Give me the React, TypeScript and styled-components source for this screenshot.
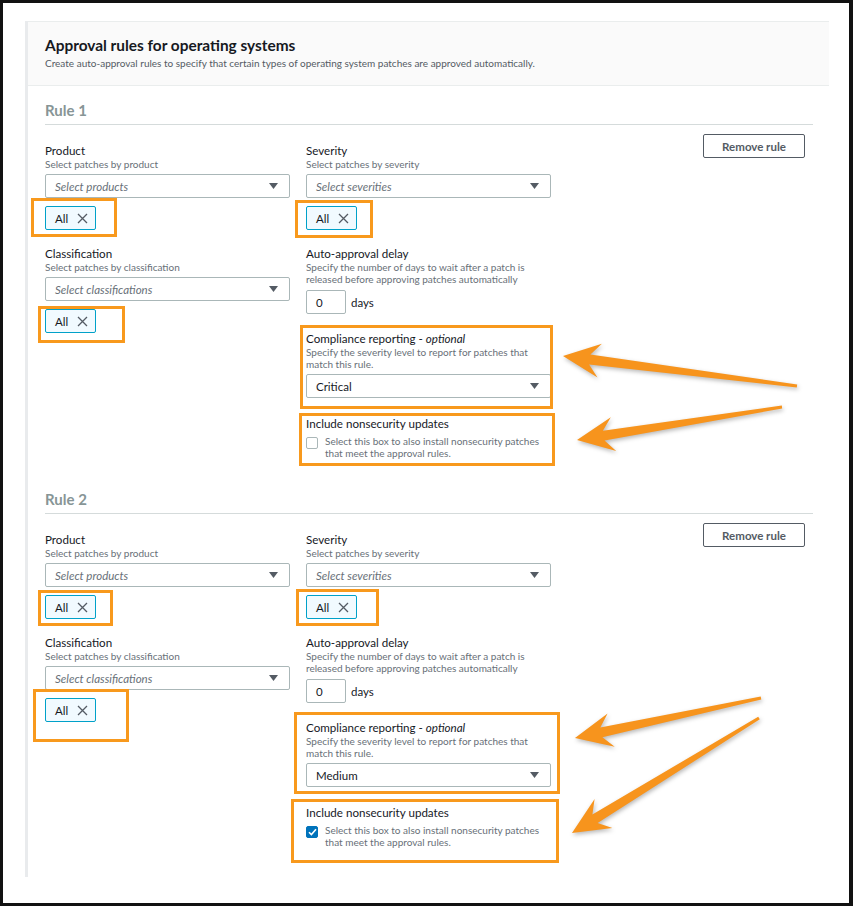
import React from 'react';
import styled, { createGlobalStyle } from 'styled-components';

const GlobalStyle = createGlobalStyle`
  * { box-sizing: border-box; }
  body {
    margin: 0;
    background: #fff;
    font-family: Lato, "Open Sans", sans-serif;
    color: #16191f;
  }
`;

const Frame = styled.div`
  position: relative;
  width: 853px;
  height: 906px;
  border: 3px solid #111;
  border-right-width: 4px;
  padding: 18px 0 0 22px;
  overflow: hidden;
`;

const Panel = styled.section`
  width: 804px;
  height: 856px;
  border-left: 3px solid #e9ebed;
`;

const Header = styled.header`
  height: 65px;
  padding: 14px 17px 0;
  background: #fafafa;
  border-top: 1px solid #eaeded;
  border-bottom: 1px solid #eaeded;
`;

const Title = styled.h2`
  margin: 0;
  font-size: 15.4px;
  font-weight: 700;
  line-height: 18px;
  color: #16191f;
`;

const Subtitle = styled.p`
  margin: 3px 0 0;
  font-size: 10px;
  line-height: 12px;
  color: #545b64;
`;

const Body = styled.div`
  padding: 14px 16px 0 17px;
`;

const Rule = styled.div`
  margin-bottom: 30px;
`;

const RuleHeading = styled.h3`
  margin: 0;
  padding-bottom: 4px;
  border-bottom: 1px solid #d5dbdb;
  font-size: 15px;
  font-weight: 700;
  line-height: 20px;
  color: #879596;
`;

const Fields = styled.div`
  display: grid;
  grid-template-columns: 245px 245px 1fr;
  column-gap: 16px;
  align-items: start;
`;

const Column = styled.div`
  display: flex;
  flex-direction: column;
  margin-top: 18px;
`;

const Field = styled.div<{ $gap?: number }>`
  margin-top: ${(p) => p.$gap ?? 0}px;
`;

const Label = styled.div`
  font-size: 11.6px;
  line-height: 15px;
  color: #16191f;

  em {
    font-style: italic;
  }
`;

const Desc = styled.div`
  font-size: 10px;
  line-height: 12px;
  color: #687078;
`;

const Select = styled.div<{ $placeholder?: boolean; $gap?: number }>`
  display: flex;
  align-items: center;
  justify-content: space-between;
  height: 24px;
  margin-top: ${(p) => p.$gap ?? 4}px;
  padding: 0 11px 0 9px;
  border: 1px solid #aab7b8;
  border-radius: 2px;
  background: #fff;
  font-size: 11.5px;
  font-style: ${(p) => (p.$placeholder ? 'italic' : 'normal')};
  color: ${(p) => (p.$placeholder ? '#687078' : '#16191f')};
`;

const Highlight = styled.div<{ $t: number; $r: number; $b: number; $l: number }>`
  position: relative;
  width: fit-content;
  margin-top: 8px;

  &::after {
    content: '';
    position: absolute;
    top: ${(p) => -p.$t}px;
    right: ${(p) => -p.$r}px;
    bottom: ${(p) => -p.$b}px;
    left: ${(p) => -p.$l}px;
    border: 3px solid #f8991d;
    pointer-events: none;
  }
`;

const BlockHighlight = styled(Highlight)`
  width: auto;
  margin-top: 0;
`;

const Token = styled.div`
  display: inline-flex;
  align-items: center;
  gap: 9px;
  height: 24px;
  padding: 0 7px 0 9px;
  border: 1px solid #00a1c9;
  border-radius: 2px;
  background: #f1faff;
  font-size: 11.5px;
  color: #16191f;
`;

const DelayRow = styled.div`
  display: flex;
  align-items: center;
  gap: 5px;
  margin-top: 5px;
  font-size: 11.5px;
`;

const NumberBox = styled.div`
  width: 40px;
  height: 24px;
  padding-left: 9px;
  display: flex;
  align-items: center;
  border: 1px solid #aab7b8;
  border-radius: 2px;
  font-size: 11.5px;
`;

const CheckRow = styled.div`
  display: flex;
  align-items: flex-start;
  gap: 7px;
  margin-top: 4px;
`;

const Box = styled.span<{ $checked?: boolean }>`
  flex: none;
  display: flex;
  align-items: center;
  justify-content: center;
  width: 12px;
  height: 12px;
  margin-top: 2px;
  border: 1px solid ${(p) => (p.$checked ? '#0073bb' : '#aab7b8')};
  border-radius: 2px;
  background: ${(p) => (p.$checked ? '#0073bb' : '#fff')};
`;

const CheckText = styled.div`
  font-size: 10px;
  line-height: 12px;
  color: #687078;
`;

const RemoveButton = styled.button`
  justify-self: end;
  width: 102px;
  height: 24px;
  margin: 9px 8px 0 0;
  border: 1px solid #545b64;
  border-radius: 2px;
  background: #fff;
  font-family: inherit;
  font-size: 11.5px;
  font-weight: 700;
  color: #545b64;
  cursor: pointer;
`;

const Arrows = styled.svg`
  position: absolute;
  top: -3px;
  left: -3px;
  pointer-events: none;
  filter: drop-shadow(1px 2px 2px rgba(0, 0, 0, 0.28));
`;

const Caret = () => (
  <svg width="9" height="6" viewBox="0 0 9 6">
    <path d="M0 0h9L4.5 6z" fill="#545b64" />
  </svg>
);

const Cross = () => (
  <svg width="11" height="11" viewBox="0 0 11 11">
    <path d="M1 1l9 9M10 1l-9 9" stroke="#545b64" strokeWidth="1.3" />
  </svg>
);

const Tick = () => (
  <svg width="9" height="8" viewBox="0 0 9 8">
    <path d="M1 4.2l2.4 2.4L8 1.2" stroke="#fff" strokeWidth="1.6" fill="none" />
  </svg>
);

type Box4 = [number, number, number, number];

type RuleData = {
  name: string;
  compliance: string;
  nonsecurity: boolean;
  product: Box4;
  severity: Box4;
  classification: Box4;
  complianceBox: Box4;
  includeBox: Box4;
};

const rules: RuleData[] = [
  {
    name: 'Rule 1',
    compliance: 'Critical',
    nonsecurity: false,
    product: [8, 21, 7, 14],
    severity: [6, 16, 8, 11],
    classification: [3, 29, 10, 7],
    complianceBox: [6, 2, 11, 6],
    includeBox: [3, 4, 7, 7],
  },
  {
    name: 'Rule 2',
    compliance: 'Medium',
    nonsecurity: true,
    product: [5, 17, 7, 7],
    severity: [6, 22, 7, 10],
    classification: [9, 33, 20, 12],
    complianceBox: [8, 9, 7, 12],
    includeBox: [6, 8, 15, 15],
  },
];

type Pt = [number, number];

const arrowList: [Pt, Pt][] = [
  [[563, 356], [797, 386]],
  [[577, 440], [782, 407]],
  [[575, 738], [761, 698]],
  [[572, 833], [759, 718]],
];

function arrowPoints(tip: Pt, tail: Pt): string {
  const dx = tip[0] - tail[0];
  const dy = tip[1] - tail[1];
  const len = Math.hypot(dx, dy);
  const ux = dx / len;
  const uy = dy / len;
  const nx = -uy;
  const ny = ux;
  const head = 34;
  const half = 17;
  const shaft = 5;
  const tailW = 1.5;
  const bx = tip[0] - ux * head;
  const by = tip[1] - uy * head;
  const p = (x: number, y: number) => `${x.toFixed(1)},${y.toFixed(1)}`;
  return [
    p(tip[0], tip[1]),
    p(bx + nx * half - ux * 3, by + ny * half - uy * 3),
    p(bx + nx * shaft + ux * 7, by + ny * shaft + uy * 7),
    p(tail[0] + nx * tailW, tail[1] + ny * tailW),
    p(tail[0] - nx * tailW, tail[1] - ny * tailW),
    p(bx - nx * shaft + ux * 7, by - ny * shaft + uy * 7),
    p(bx - nx * half - ux * 3, by - ny * half - uy * 3),
  ].join(' ');
}

const AllToken: React.FC<{ box: Box4 }> = ({ box }) => (
  <Highlight $t={box[0]} $r={box[1]} $b={box[2]} $l={box[3]}>
    <Token>
      All <Cross />
    </Token>
  </Highlight>
);

const RuleBlock: React.FC<{ rule: RuleData }> = ({ rule }) => {
  const c = rule.complianceBox;
  const i = rule.includeBox;
  return (
    <Rule>
      <RuleHeading>{rule.name}</RuleHeading>
      <Fields>
        <Column>
          <Field>
            <Label>Product</Label>
            <Desc>Select patches by product</Desc>
            <Select $placeholder>
              Select products <Caret />
            </Select>
            <AllToken box={rule.product} />
          </Field>
          <Field $gap={16}>
            <Label>Classification</Label>
            <Desc>Select patches by classification</Desc>
            <Select $placeholder>
              Select classifications <Caret />
            </Select>
            <AllToken box={rule.classification} />
          </Field>
        </Column>

        <Column>
          <Field>
            <Label>Severity</Label>
            <Desc>Select patches by severity</Desc>
            <Select $placeholder>
              Select severities <Caret />
            </Select>
            <AllToken box={rule.severity} />
          </Field>
          <Field $gap={16}>
            <Label>Auto-approval delay</Label>
            <Desc>
              Specify the number of days to wait after a patch is
              <br />
              released before approving patches automatically
            </Desc>
            <DelayRow>
              <NumberBox>0</NumberBox>
              days
            </DelayRow>
          </Field>
          <Field $gap={17}>
            <BlockHighlight $t={c[0]} $r={c[1]} $b={c[2]} $l={c[3]}>
              <Label>
                Compliance reporting - <em>optional</em>
              </Label>
              <Desc>
                Specify the severity level to report for patches that
                <br />
                match this rule.
              </Desc>
              <Select>
                {rule.compliance} <Caret />
              </Select>
            </BlockHighlight>
          </Field>
          <Field $gap={18}>
            <BlockHighlight $t={i[0]} $r={i[1]} $b={i[2]} $l={i[3]}>
              <Label>Include nonsecurity updates</Label>
              <CheckRow>
                <Box $checked={rule.nonsecurity}>{rule.nonsecurity && <Tick />}</Box>
                <CheckText>
                  Select this box to also install nonsecurity patches
                  <br />
                  that meet the approval rules.
                </CheckText>
              </CheckRow>
            </BlockHighlight>
          </Field>
        </Column>

        <RemoveButton>Remove rule</RemoveButton>
      </Fields>
    </Rule>
  );
};

export default function App() {
  return (
    <>
      <GlobalStyle />
      <Frame>
        <Panel>
          <Header>
            <Title>Approval rules for operating systems</Title>
            <Subtitle>
              Create auto-approval rules to specify that certain types of operating system patches are
              approved automatically.
            </Subtitle>
          </Header>
          <Body>
            {rules.map((r) => (
              <RuleBlock key={r.name} rule={r} />
            ))}
          </Body>
        </Panel>
        <Arrows width="853" height="906" viewBox="0 0 853 906">
          {arrowList.map(([tip, tail], n) => (
            <polygon key={n} points={arrowPoints(tip, tail)} fill="#f7941d" />
          ))}
        </Arrows>
      </Frame>
    </>
  );
}
